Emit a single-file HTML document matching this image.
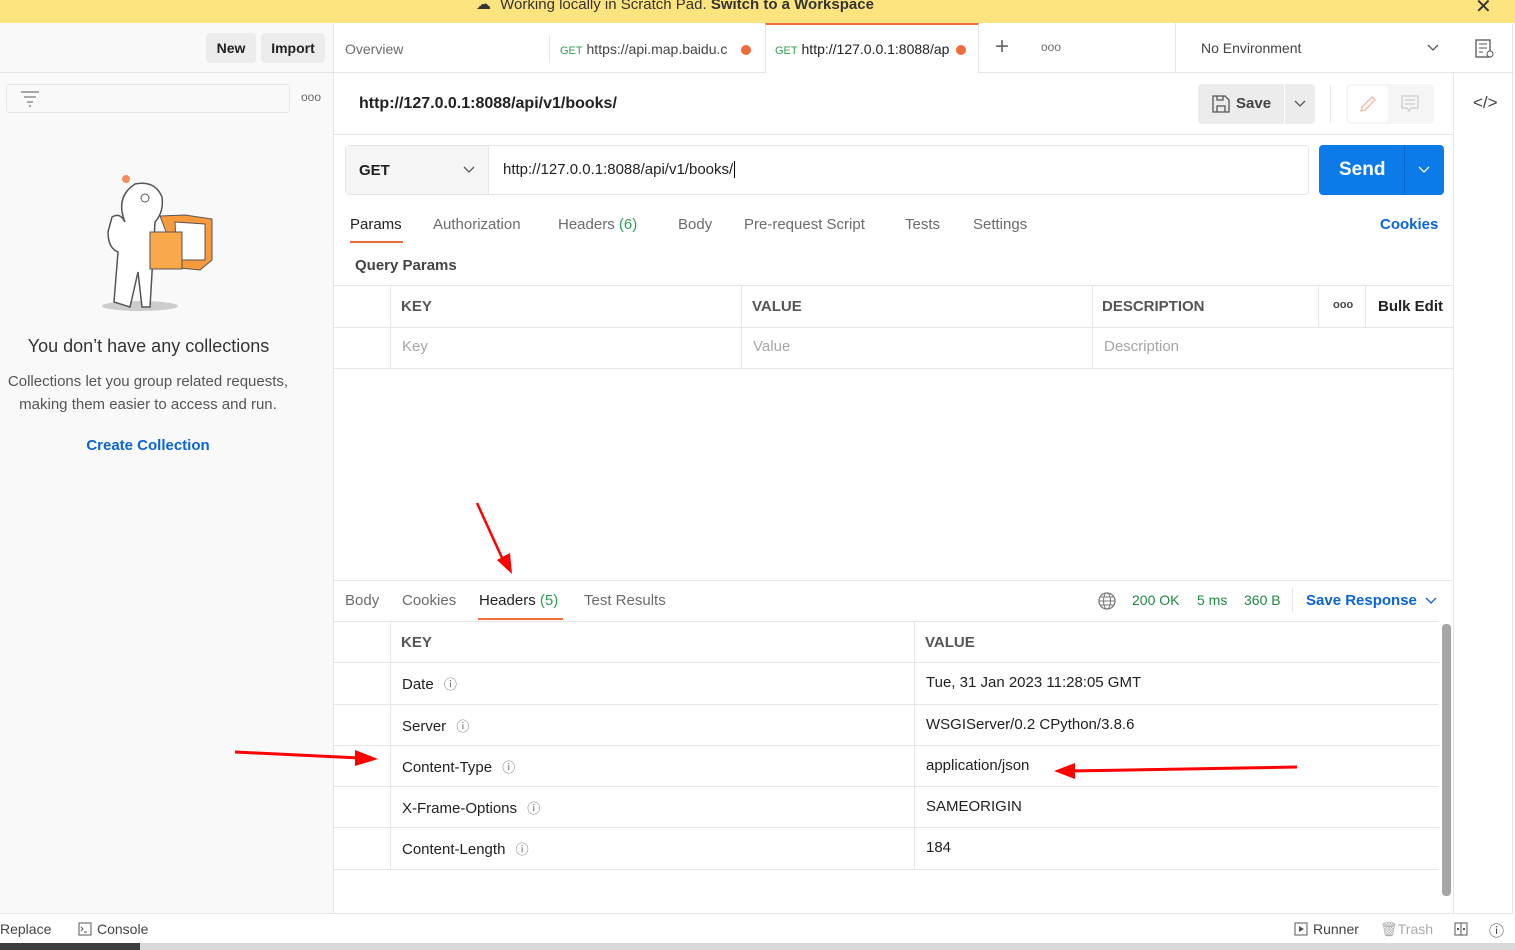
<!DOCTYPE html>
<html><head><meta charset="utf-8"><style>
*{box-sizing:border-box;margin:0;padding:0}
body{width:1515px;height:950px;overflow:hidden;font-family:"Liberation Sans",sans-serif;font-size:14px;color:#212121;background:#fff;position:relative}
.a{position:absolute}
.line{position:absolute;background:#e6e6e6}
.g{color:#6b6b6b}
.ph{color:#a6a6a6}
</style></head><body>
<!-- banner -->
<div class="a" style="left:0;top:0;width:1515px;height:23px;background:#fde47f"></div>
<div class="a" style="left:476px;top:-5px;font-size:15px;color:#333"><span style="display:inline-block;width:20px">☁</span> Working locally in Scratch Pad. <b>Switch to a Workspace</b></div>
<div class="a" style="left:1475px;top:-6px;font-size:20px;color:#333">✕</div>
<!-- sidebar -->
<div class="a" style="left:0;top:23px;width:334px;height:890px;background:#f9f9f9;border-right:1px solid #e6e6e6"></div>
<div class="line" style="left:0;top:72px;width:334px;height:1px"></div>
<div class="a" style="left:206px;top:33px;width:50px;height:30px;background:#ececec;border-radius:4px;font-weight:bold;text-align:center;line-height:30px;font-size:14px">New</div>
<div class="a" style="left:261px;top:33px;width:64px;height:30px;background:#ececec;border-radius:4px;font-weight:bold;text-align:center;line-height:30px;font-size:14px">Import</div>
<div class="a" style="left:6px;top:84px;width:284px;height:29px;border:1px solid #e6e6e6;border-radius:3px;background:#f9f9f9"></div>
<svg class="a" style="left:20px;top:90px" width="20" height="18"><path d="M1 2H19M4 7H16M7 12H13M9 16H11" stroke="#777" stroke-width="1.3"/></svg>
<div class="a g" style="left:301px;top:90px;font-size:12px">ooo</div>
<svg class="a" style="left:100px;top:172px" width="118" height="142">
<ellipse cx="40" cy="134" rx="38" ry="5" fill="#ccc"/>
<circle cx="26" cy="7" r="4" fill="#f68a5c"/>
<path d="M14 130 L18 80 Q8 76 8 60 L12 45 Q20 40 25 50 Q15 25 35 12 Q55 8 62 25 Q64 40 55 50 L50 135 L42 135 L38 100 L30 135 Z" fill="#fff" stroke="#555" stroke-width="1.5"/>
<circle cx="45" cy="26" r="4" fill="#fff" stroke="#555"/>
<path d="M60 44 L85 43 L112 47 L112 88 L100 98 L80 96 Z" fill="#f79a3c" stroke="#555"/>
<path d="M75 50 L105 52 L105 88 L77 88 Z" fill="#fff" stroke="#555"/>
<path d="M50 60 L82 60 L82 97 L50 97 Z" fill="#f9a84a" stroke="#555"/>
</svg>
<div class="a" style="left:0;top:336px;width:297px;text-align:center;font-size:18px;color:#333">You don’t have any collections</div>
<div class="a g" style="left:-10px;top:370px;width:316px;text-align:center;font-size:15px;line-height:23px;color:#555">Collections let you group related requests,<br>making them easier to access and run.</div>
<div class="a" style="left:0;top:437px;width:296px;text-align:center;font-size:15px;color:#0b64d6;font-weight:bold">Create Collection</div>
<!-- tabs -->
<div class="line" style="left:334px;top:72px;width:1180px;height:1px"></div>
<div class="a g" style="left:345px;top:41px;font-size:14px">Overview</div>
<div class="line" style="left:549px;top:35px;width:1px;height:28px"></div>
<div class="a" style="left:560px;top:41px;font-size:14px;white-space:nowrap"><span style="color:#2e9e54;font-size:11px">GET</span> <span style="color:#444">https://api.map.baidu.c</span></div>
<div class="a" style="left:741px;top:45px;width:10px;height:10px;border-radius:50%;background:#f26b3a"></div>
<div class="a" style="left:765px;top:23px;width:214px;height:50px;background:#fff;border-top:2px solid #f26b3a;border-left:1px solid #e6e6e6;border-right:1px solid #e6e6e6"></div>
<div class="a" style="left:775px;top:41px;font-size:14px;white-space:nowrap"><span style="color:#2e9e54;font-size:11px">GET</span> <span style="color:#222">http://127.0.0.1:8088/ap</span></div>
<div class="a" style="left:956px;top:45px;width:10px;height:10px;border-radius:50%;background:#f26b3a"></div>
<div class="a g" style="left:995px;top:33px;font-size:24px;font-weight:300">+</div>
<div class="a g" style="left:1041px;top:40px;font-size:12px">ooo</div>
<div class="line" style="left:1175px;top:23px;width:1px;height:50px"></div>
<div class="a" style="left:1201px;top:40px;color:#444">No Environment</div>
<svg class="a" style="left:1426px;top:43px" width="14" height="10"><path d="M2 2L7 7L12 2" stroke="#555" fill="none" stroke-width="1.3"/></svg>
<svg class="a" style="left:1474px;top:38px" width="22" height="22"><rect x="2" y="2" width="14" height="17" fill="none" stroke="#555" stroke-width="1.3"/><path d="M5 6H13M5 10H13M5 14H9" stroke="#555"/><circle cx="16" cy="16" r="3" fill="#fff" stroke="#555"/></svg>
<!-- right panel -->
<div class="line" style="left:1453px;top:73px;width:1px;height:840px"></div>
<div class="line" style="left:1512px;top:23px;width:1px;height:890px"></div>
<div class="a g" style="left:1473px;top:93px;font-size:17px;color:#444">&lt;/&gt;</div>
<!-- request name -->
<div class="a" style="left:359px;top:95px;font-size:16px;font-weight:bold;color:#222">http://127.0.0.1:8088/api/v1/books/</div>
<div class="a" style="left:1198px;top:84px;width:86px;height:40px;background:#ececec;border-radius:4px 0 0 4px"></div>
<svg class="a" style="left:1211px;top:94px" width="20" height="20"><path d="M2 2H14L18 6V18H2Z M6 18V12H14V18 M6 2V6H12V2" fill="none" stroke="#555" stroke-width="1.3"/></svg>
<div class="a" style="left:1236px;top:95px;font-size:15px;font-weight:bold;color:#444">Save</div>
<div class="a" style="left:1285px;top:84px;width:30px;height:40px;background:#ececec;border-radius:0 4px 4px 0"></div>
<svg class="a" style="left:1293px;top:99px" width="14" height="10"><path d="M2 2L7 7L12 2" stroke="#555" fill="none" stroke-width="1.3"/></svg>
<div class="line" style="left:1330px;top:85px;width:1px;height:38px"></div>
<div class="a" style="left:1346px;top:84px;width:88px;height:40px;background:#f5f5f5;border-radius:4px"></div>
<div class="a" style="left:1348px;top:86px;width:40px;height:36px;background:#fff;border-radius:4px"></div>
<svg class="a" style="left:1358px;top:94px" width="20" height="20"><path d="M3 17L4 13L14 3L17 6L7 16Z" fill="none" stroke="#f7b4a0" stroke-width="1.3"/></svg>
<svg class="a" style="left:1400px;top:94px" width="20" height="20"><path d="M2 2H18V14H11L9 17L7 14H2Z M5 6H15M5 10H15" fill="none" stroke="#ccc" stroke-width="1.3"/></svg>
<div class="line" style="left:334px;top:134px;width:1119px;height:1px"></div>
<!-- URL bar -->
<div class="a" style="left:345px;top:145px;width:964px;height:50px;border:1px solid #e6e6e6;border-radius:4px"></div>
<div class="a" style="left:346px;top:146px;width:143px;height:48px;background:#f5f5f5;border-right:1px solid #e6e6e6"></div>
<div class="a" style="left:359px;top:162px;font-weight:bold;font-size:15px">GET</div>
<svg class="a" style="left:462px;top:165px" width="14" height="10"><path d="M2 2L7 7L12 2" stroke="#555" fill="none" stroke-width="1.3"/></svg>
<div class="a" style="left:503px;top:161px;font-size:15px;color:#222">http://127.0.0.1:8088/api/v1/books/<span style="border-left:1px solid #000;margin-left:1px"></span></div>
<div class="a" style="left:1319px;top:145px;width:125px;height:50px;background:#0c7ae8;border-radius:4px"></div>
<div class="line" style="left:1404px;top:145px;width:1px;height:50px;background:#0a68c8"></div>
<div class="a" style="left:1339px;top:159px;font-size:19px;font-weight:bold;color:#fff">Send</div>
<svg class="a" style="left:1417px;top:165px" width="14" height="10"><path d="M2 2L7 7L12 2" stroke="#fff" fill="none" stroke-width="1.3"/></svg>
<!-- req tabs -->
<div class="a" style="left:350px;top:216px;font-size:15px;color:#222">Params</div>
<div class="a" style="left:350px;top:241px;width:53px;height:2px;background:#f26b3a"></div>
<div class="a g" style="left:433px;top:216px;font-size:15px">Authorization</div>
<div class="a g" style="left:558px;top:216px;font-size:15px">Headers <span style="color:#2e9e54">(6)</span></div>
<div class="a g" style="left:678px;top:216px;font-size:15px">Body</div>
<div class="a g" style="left:744px;top:216px;font-size:15px">Pre-request Script</div>
<div class="a g" style="left:905px;top:216px;font-size:15px">Tests</div>
<div class="a g" style="left:973px;top:216px;font-size:15px">Settings</div>
<div class="a" style="left:1380px;top:216px;font-size:15px;color:#0b64d6;font-weight:bold">Cookies</div>
<div class="a" style="left:355px;top:257px;font-size:15px;font-weight:bold;color:#444">Query Params</div>
<!-- params table -->
<div class="line" style="left:334px;top:285px;width:1119px;height:1px"></div>
<div class="line" style="left:334px;top:327px;width:1119px;height:1px"></div>
<div class="line" style="left:334px;top:368px;width:1119px;height:1px"></div>
<div class="line" style="left:390px;top:286px;width:1px;height:82px"></div>
<div class="line" style="left:741px;top:286px;width:1px;height:82px"></div>
<div class="line" style="left:1092px;top:286px;width:1px;height:82px"></div>
<div class="line" style="left:1318px;top:286px;width:1px;height:41px"></div>
<div class="line" style="left:1365px;top:286px;width:1px;height:41px"></div>
<div class="a" style="left:401px;top:298px;font-size:15px;font-weight:bold;color:#555">KEY</div>
<div class="a" style="left:752px;top:298px;font-size:15px;font-weight:bold;color:#555">VALUE</div>
<div class="a" style="left:1102px;top:298px;font-size:15px;font-weight:bold;color:#555">DESCRIPTION</div>
<div class="a" style="left:1333px;top:299px;font-size:11px;font-weight:bold;color:#444">ooo</div>
<div class="a" style="left:1378px;top:298px;font-size:15px;font-weight:bold;color:#222">Bulk Edit</div>
<div class="a ph" style="left:402px;top:338px;font-size:15px">Key</div>
<div class="a ph" style="left:753px;top:338px;font-size:15px">Value</div>
<div class="a ph" style="left:1104px;top:338px;font-size:15px">Description</div>
<!-- response -->
<div class="line" style="left:334px;top:580px;width:1119px;height:1px"></div>
<div class="a g" style="left:345px;top:592px;font-size:15px">Body</div>
<div class="a g" style="left:402px;top:592px;font-size:15px">Cookies</div>
<div class="a" style="left:479px;top:592px;font-size:15px;color:#222">Headers <span style="color:#2e9e54">(5)</span></div>
<div class="a" style="left:478px;top:618px;width:85px;height:2px;background:#f26b3a"></div>
<div class="a g" style="left:584px;top:592px;font-size:15px">Test Results</div>
<svg class="a" style="left:1097px;top:591px" width="20" height="20"><circle cx="10" cy="10" r="8" fill="none" stroke="#777" stroke-width="1.3"/><ellipse cx="10" cy="10" rx="3.5" ry="8" fill="none" stroke="#777"/><path d="M2 10H18M4 6H16M4 14H16" stroke="#777"/></svg>
<div class="a" style="left:1132px;top:592px;font-size:14px;color:#1e8a3e">200 OK</div>
<div class="a" style="left:1197px;top:592px;font-size:14px;color:#1e8a3e">5 ms</div>
<div class="a" style="left:1244px;top:592px;font-size:14px;color:#1e8a3e">360 B</div>
<div class="line" style="left:1292px;top:588px;width:1px;height:24px"></div>
<div class="a" style="left:1306px;top:592px;font-size:15px;font-weight:bold;color:#0b64d6">Save Response</div>
<svg class="a" style="left:1424px;top:596px" width="14" height="10"><path d="M2 2L7 7L12 2" stroke="#0b64d6" fill="none" stroke-width="1.3"/></svg>
<div class="line" style="left:334px;top:621px;width:1105px;height:1px"></div>
<div class="a" style="left:1442px;top:624px;width:9px;height:272px;background:#a6a6a6;border-radius:4px"></div>
<div class="line" style="left:334px;top:662px;width:1105px;height:1px"></div>
<div class="line" style="left:334px;top:704px;width:1105px;height:1px"></div>
<div class="line" style="left:334px;top:745px;width:1105px;height:1px"></div>
<div class="line" style="left:334px;top:786px;width:1105px;height:1px"></div>
<div class="line" style="left:334px;top:827px;width:1105px;height:1px"></div>
<div class="line" style="left:334px;top:869px;width:1105px;height:1px"></div>
<div class="line" style="left:390px;top:622px;width:1px;height:247px"></div>
<div class="line" style="left:914px;top:622px;width:1px;height:247px"></div>
<div class="a" style="left:401px;top:634px;font-size:15px;font-weight:bold;color:#555">KEY</div>
<div class="a" style="left:925px;top:634px;font-size:15px;font-weight:bold;color:#555">VALUE</div>
<div class="a" style="left:402px;top:674px;font-size:15px">Date <span style="font-size:13px;color:#666;margin-left:6px">ⓘ</span></div>
<div class="a" style="left:402px;top:716px;font-size:15px">Server <span style="font-size:13px;color:#666;margin-left:6px">ⓘ</span></div>
<div class="a" style="left:402px;top:757px;font-size:15px">Content-Type <span style="font-size:13px;color:#666;margin-left:6px">ⓘ</span></div>
<div class="a" style="left:402px;top:798px;font-size:15px">X-Frame-Options <span style="font-size:13px;color:#666;margin-left:6px">ⓘ</span></div>
<div class="a" style="left:402px;top:839px;font-size:15px">Content-Length <span style="font-size:13px;color:#666;margin-left:6px">ⓘ</span></div>
<div class="a" style="left:926px;top:674px;font-size:15px">Tue, 31 Jan 2023 11:28:05 GMT</div>
<div class="a" style="left:926px;top:716px;font-size:15px">WSGIServer/0.2 CPython/3.8.6</div>
<div class="a" style="left:926px;top:757px;font-size:15px">application/json</div>
<div class="a" style="left:926px;top:798px;font-size:15px">SAMEORIGIN</div>
<div class="a" style="left:926px;top:839px;font-size:15px">184</div>
<!-- arrows -->
<svg class="a" style="left:0;top:0" width="1515" height="950">
<path d="M477 503 L503 560" stroke="#f00" stroke-width="2.5"/><path d="M497 560 L512 574 L510 553 Z" fill="#f00"/>
<path d="M235 752 L360 758" stroke="#f00" stroke-width="3"/><path d="M355 750 L378 759 L355 766 Z" fill="#f00"/>
<path d="M1297 767 L1070 771" stroke="#f00" stroke-width="3"/><path d="M1075 763 L1054 771 L1075 779 Z" fill="#f00"/>
</svg>
<!-- footer -->
<div class="line" style="left:0;top:913px;width:1513px;height:1px"></div>
<div class="a" style="left:0;top:921px;font-size:14px;color:#444">Replace</div>
<svg class="a" style="left:78px;top:922px" width="14" height="14"><rect x="1" y="1" width="12" height="12" fill="none" stroke="#555"/><path d="M3 9L5 7L3 5M6 10H9" stroke="#555" fill="none"/></svg>
<div class="a" style="left:97px;top:921px;font-size:14px;color:#444">Console</div>
<svg class="a" style="left:1294px;top:922px" width="14" height="14"><rect x="1" y="1" width="12" height="12" fill="none" stroke="#555"/><path d="M5 4L10 7L5 10Z" fill="#555"/></svg>
<div class="a" style="left:1313px;top:921px;font-size:14px;color:#444">Runner</div>
<div class="a" style="left:1380px;top:921px;font-size:14px;color:#aaa">🗑Trash</div>
<svg class="a" style="left:1454px;top:922px" width="14" height="14"><rect x="1" y="1" width="12" height="12" fill="none" stroke="#555"/><path d="M7 1V13" stroke="#555"/><rect x="3" y="6" width="2" height="2" fill="#555"/><rect x="9" y="6" width="2" height="2" fill="#555"/></svg>
<div class="a" style="left:1489px;top:920px;font-size:15px;color:#444">ⓘ</div>
<div class="a" style="left:0;top:943px;width:1515px;height:7px;background:#d9d9d9"></div>
<div class="a" style="left:0;top:943px;width:140px;height:7px;background:#3c3f41"></div>
</body></html>
